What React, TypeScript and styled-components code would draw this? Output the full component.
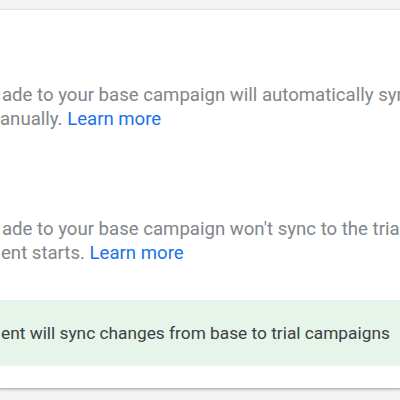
import React from "react";
import styled, { createGlobalStyle } from "styled-components";

const Global = createGlobalStyle`
  html, body { margin: 0; padding: 0; background: #f1f3f4; }
  body { font-family: Roboto, "Noto Sans", Arial, sans-serif; overflow: hidden; }
`;

const Page = styled.div`
  width: 400px;
  height: 400px;
  overflow: hidden;
  display: flex;
  flex-direction: column;
  padding-top: 10px;
  box-sizing: border-box;
`;

const Card = styled.div`
  background: #ffffff;
  height: 378px;
  box-sizing: border-box;
  padding: 73px 0 22px 0;
  box-shadow: 0 1px 2px rgba(60, 64, 67, 0.3), 0 1px 3px 1px rgba(60, 64, 67, 0.15);
  display: flex;
  flex-direction: column;
  overflow: hidden;
`;

const Section = styled.div<{ $gap: number }>`
  margin-bottom: ${(p) => p.$gap}px;
`;

const Desc = styled.p<{ $indent?: number }>`
  margin: 0;
  padding-left: ${(p) => p.$indent ?? 1}px;
  font-size: 18.6px;
  line-height: 24px;
  color: #80868b;
  white-space: nowrap;
`;

const Link = styled.a`
  color: #1a73e8;
  text-decoration: none;
`;

const Banner = styled.div`
  background: #e6f4ea;
  padding: 21px 0 21px 1px;
  font-size: 17.3px;
  line-height: 24px;
  color: #3c4043;
  white-space: nowrap;
`;

export default function App() {
  return (
    <>
      <Global />
      <Page>
        <Card>
          <Section $gap={86}>
            <Desc $indent={2}>ade to your base campaign will automatically sync to the trial</Desc>
            <Desc $indent={0}>
              anually. <Link href="#">Learn more</Link>
            </Desc>
          </Section>
          <Section $gap={35}>
            <Desc $indent={2}>ade to your base campaign won't sync to the trial</Desc>
            <Desc $indent={1}>
              ent starts. <Link href="#">Learn more</Link>
            </Desc>
          </Section>
          <Banner>ent will sync changes from base to trial campaigns</Banner>
        </Card>
      </Page>
    </>
  );
}
